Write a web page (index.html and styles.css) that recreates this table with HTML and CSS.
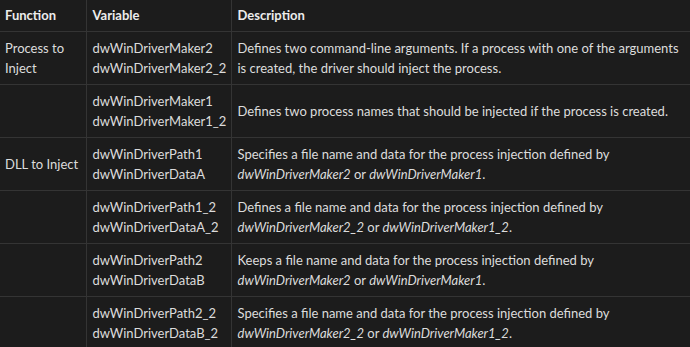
FILE: index.html
```html
<!DOCTYPE html>
<html lang="en">
<head>
    <meta name="viewport" content="width=device-width, initial-scale=1.0" />
    <title>Injection configuration</title>
    <link rel="stylesheet" href="styles.css">
</head>
<body>
    <table class="config-table">
        <colgroup>
            <col class="col-function">
            <col class="col-variable">
            <col class="col-description">
        </colgroup>
        <thead>
            <tr>
                <th>Function</th>
                <th>Variable</th>
                <th>Description</th>
            </tr>
        </thead>
        <tbody>
            <tr>
                <td>Process to Inject</td>
                <td>dwWinDriverMaker2<br>dwWinDriverMaker2_2</td>
                <td>Defines two command-line arguments. If a process with one of the arguments is created, the driver should inject the process.</td>
            </tr>
            <tr>
                <td></td>
                <td>dwWinDriverMaker1<br>dwWinDriverMaker1_2</td>
                <td>Defines two process names that should be injected if the process is created.</td>
            </tr>
            <tr>
                <td>DLL to Inject</td>
                <td>dwWinDriverPath1<br>dwWinDriverDataA</td>
                <td>Specifies a file name and data for the process injection defined by<br><i>dwWinDriverMaker2</i> or <i>dwWinDriverMaker1</i>.</td>
            </tr>
            <tr>
                <td></td>
                <td>dwWinDriverPath1_2<br>dwWinDriverDataA_2</td>
                <td>Defines a file name and data for the process injection defined by<br><i>dwWinDriverMaker2_2</i> or <i>dwWinDriverMaker1_2</i>.</td>
            </tr>
            <tr>
                <td></td>
                <td>dwWinDriverPath2<br>dwWinDriverDataB</td>
                <td>Keeps a file name and data for the process injection defined by<br><i>dwWinDriverMaker2</i> or <i>dwWinDriverMaker1</i>.</td>
            </tr>
            <tr>
                <td></td>
                <td>dwWinDriverPath2_2<br>dwWinDriverDataB_2</td>
                <td>Specifies a file name and data for the process injection defined by<br><i>dwWinDriverMaker2_2</i> or <i>dwWinDriverMaker1_2</i>.</td>
            </tr>
        </tbody>
    </table>
</body>
</html>
```

FILE: styles.css
```css
* {
    padding: 0;
    margin: 0;
    box-sizing: border-box;
}

body {
    background-color: #1c1c1c;
    font-family: "Lato", "Noto Sans", sans-serif;
    font-size: 13px;
    color: #dcdcdc;
}

.config-table {
    width: 690px;
    table-layout: fixed;
    border-collapse: collapse;
}

.col-function {
    width: 86px;
}

.col-variable {
    width: 145px;
}

.config-table th,
.config-table td {
    text-align: left;
    vertical-align: middle;
    padding: 6px 5px 6px 6px;
    line-height: 20px;
    border-bottom: 1px solid #343434;
    border-right: 1px solid #343434;
}

.config-table th:last-child,
.config-table td:last-child {
    border-right: none;
}

.config-table th {
    font-weight: 700;
    color: #ececec;
    padding-top: 5px;
    padding-bottom: 6px;
}

.config-table tbody td:first-child {
    padding-left: 5px;
}

.config-table thead th:first-child {
    padding-left: 5px;
}
```
